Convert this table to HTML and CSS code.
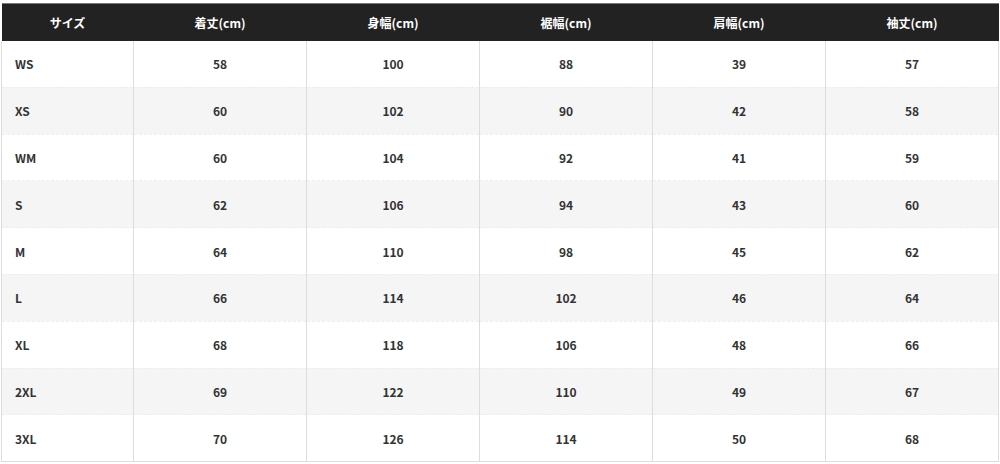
FILE: index.html
```html
<!DOCTYPE html>
<html lang="ja">
<head>
<meta charset="utf-8">
<link rel="stylesheet" href="styles.css">
</head>
<body>
<table class="size-table">
  <colgroup>
    <col class="c-size">
    <col class="c-val"><col class="c-val"><col class="c-val"><col class="c-val"><col class="c-val">
  </colgroup>
  <thead>
    <tr><th>サイズ</th><th>着丈(cm)</th><th>身幅(cm)</th><th>裾幅(cm)</th><th>肩幅(cm)</th><th>袖丈(cm)</th></tr>
  </thead>
  <tbody>
    <tr><td>WS</td><td>58</td><td>100</td><td>88</td><td>39</td><td>57</td></tr>
    <tr><td>XS</td><td>60</td><td>102</td><td>90</td><td>42</td><td>58</td></tr>
    <tr><td>WM</td><td>60</td><td>104</td><td>92</td><td>41</td><td>59</td></tr>
    <tr><td>S</td><td>62</td><td>106</td><td>94</td><td>43</td><td>60</td></tr>
    <tr><td>M</td><td>64</td><td>110</td><td>98</td><td>45</td><td>62</td></tr>
    <tr><td>L</td><td>66</td><td>114</td><td>102</td><td>46</td><td>64</td></tr>
    <tr><td>XL</td><td>68</td><td>118</td><td>106</td><td>48</td><td>66</td></tr>
    <tr><td>2XL</td><td>69</td><td>122</td><td>110</td><td>49</td><td>67</td></tr>
    <tr><td>3XL</td><td>70</td><td>126</td><td>114</td><td>50</td><td>68</td></tr>
  </tbody>
</table>
</body>
</html>
```
FILE: styles.css
```css
html, body {
  margin: 0;
  padding: 0;
  background: #fff;
}
body {
  padding: 3px 0 0 1px;
  font-family: "Noto Sans CJK JP", "Noto Sans", sans-serif;
  font-weight: 700;
  font-size: 12px;
  color: #333;
}
.size-table {
  border-collapse: collapse;
  table-layout: fixed;
  width: 998px;
  border-top: 1px solid #777;
}
.c-size { width: 132px; }
.c-val { width: 173px; }
.size-table th {
  background: #222;
  color: #fff;
  height: 37px;
  padding: 0;
  font-weight: 700;
  font-size: 12px;
  text-align: center;
  vertical-align: middle;
}
.size-table td {
  height: 45.8px;
  padding: 0;
  text-align: center;
  vertical-align: middle;
  border-left: 1px solid #ddd;
  border-right: 1px solid #ddd;
  border-bottom: 1px dashed #eee;
}
.size-table tbody tr:last-child td {
  border-bottom: 1px solid #ddd;
}
.size-table td:first-child {
  text-align: left;
  padding-left: 13px;
}
.size-table tbody tr:nth-child(even) td {
  background: #f5f5f5;
}
```
